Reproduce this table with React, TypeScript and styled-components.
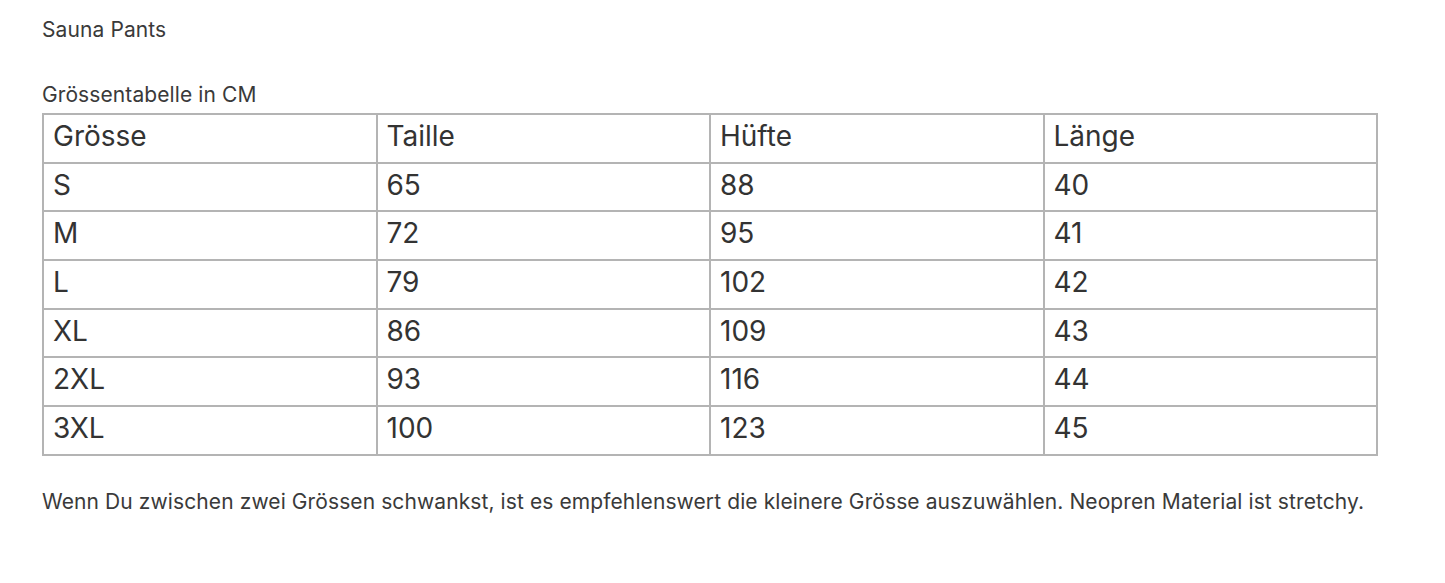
import React from "react";
import styled, { createGlobalStyle } from "styled-components";

const GlobalStyle = createGlobalStyle`
  body {
    margin: 0;
    background: #ffffff;
    font-family: Inter, "Noto Sans", sans-serif;
    color: #3a3a3a;
  }
`;

const Page = styled.div`
  padding: 18px 42px 0 42px;
`;

const Title = styled.p`
  margin: 0;
  font-size: 21px;
  line-height: 24px;
  letter-spacing: 0.1px;
`;

const Caption = styled.p`
  margin: 41px 0 6px 0;
  font-size: 21px;
  line-height: 24px;
  letter-spacing: 0.1px;
`;

const Table = styled.table`
  width: 1336px;
  border-collapse: collapse;
  border: 2px solid #b4b4b4;
  table-layout: fixed;
`;

const Cell = styled.td`
  border: 2px solid #b4b4b4;
  height: 41.7px;
  padding: 0 9px 5px 9px;
  font-size: 28px;
  line-height: 34px;
  color: #333333;
  vertical-align: middle;
`;

const Note = styled.p`
  margin: 34px 0 0 0;
  font-size: 21px;
  line-height: 24px;
  letter-spacing: 0.1px;
`;

const rows = [
  ["Grösse", "Taille", "Hüfte", "Länge"],
  ["S", "65", "88", "40"],
  ["M", "72", "95", "41"],
  ["L", "79", "102", "42"],
  ["XL", "86", "109", "43"],
  ["2XL", "93", "116", "44"],
  ["3XL", "100", "123", "45"],
];

export default function App() {
  return (
    <>
      <GlobalStyle />
      <Page>
        <Title>Sauna Pants</Title>
        <Caption>Grössentabelle in CM</Caption>
        <Table>
          <tbody>
            {rows.map((row, i) => (
              <tr key={i}>
                {row.map((cell, j) => (
                  <Cell key={j}>{cell}</Cell>
                ))}
              </tr>
            ))}
          </tbody>
        </Table>
        <Note>
          Wenn Du zwischen zwei Grössen schwankst, ist es empfehlenswert die
          kleinere Grösse auszuwählen. Neopren Material ist stretchy.
        </Note>
      </Page>
    </>
  );
}
